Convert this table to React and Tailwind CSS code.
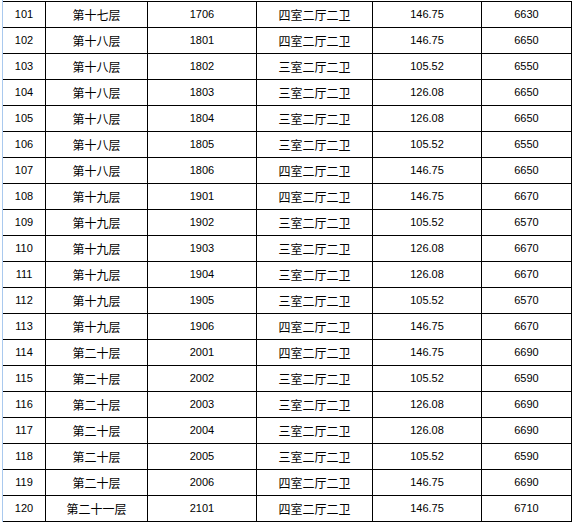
const rows = [
  ["101", "第十七层", "1706", "四室二厅二卫", "146.75", "6630"],
  ["102", "第十八层", "1801", "四室二厅二卫", "146.75", "6650"],
  ["103", "第十八层", "1802", "三室二厅二卫", "105.52", "6550"],
  ["104", "第十八层", "1803", "三室二厅二卫", "126.08", "6650"],
  ["105", "第十八层", "1804", "三室二厅二卫", "126.08", "6650"],
  ["106", "第十八层", "1805", "三室二厅二卫", "105.52", "6550"],
  ["107", "第十八层", "1806", "四室二厅二卫", "146.75", "6650"],
  ["108", "第十九层", "1901", "四室二厅二卫", "146.75", "6670"],
  ["109", "第十九层", "1902", "三室二厅二卫", "105.52", "6570"],
  ["110", "第十九层", "1903", "三室二厅二卫", "126.08", "6670"],
  ["111", "第十九层", "1904", "三室二厅二卫", "126.08", "6670"],
  ["112", "第十九层", "1905", "三室二厅二卫", "105.52", "6570"],
  ["113", "第十九层", "1906", "四室二厅二卫", "146.75", "6670"],
  ["114", "第二十层", "2001", "四室二厅二卫", "146.75", "6690"],
  ["115", "第二十层", "2002", "三室二厅二卫", "105.52", "6590"],
  ["116", "第二十层", "2003", "三室二厅二卫", "126.08", "6690"],
  ["117", "第二十层", "2004", "三室二厅二卫", "126.08", "6690"],
  ["118", "第二十层", "2005", "三室二厅二卫", "105.52", "6590"],
  ["119", "第二十层", "2006", "四室二厅二卫", "146.75", "6690"],
  ["120", "第二十一层", "2101", "四室二厅二卫", "146.75", "6710"],
];

const num = "font-['Liberation_Sans',Arial,sans-serif] text-[11px]";
const cjk = "font-['Noto_Sans_CJK_SC',sans-serif] text-[12px]";

function Row({ r }) {
  return (
    <div className="flex h-[26px] border-b border-black">
      <div className={`flex w-[43px] items-center justify-center border-r border-black ${num}`}>{r[0]}</div>
      <div className={`flex w-[102px] items-center justify-center border-r border-black ${cjk}`}>{r[1]}</div>
      <div className={`flex w-[109px] items-center justify-center border-r border-black ${num}`}>{r[2]}</div>
      <div className={`flex w-[116px] items-center justify-center border-r border-black ${cjk}`}>{r[3]}</div>
      <div className={`flex w-[109px] items-center justify-center border-r border-black ${num}`}>{r[4]}</div>
      <div className={`flex w-[90px] items-center justify-center border-r border-black ${num}`}>{r[5]}</div>
    </div>
  );
}

export default function App() {
  return (
    <div className="flex h-[522px] w-[573px] bg-white text-black">
      <div className="ml-[2px] w-[1px] bg-[#a9c9ee]"></div>
      <div className="mt-[1px] w-[569px]">
        <div className="border-t border-black">
          {rows.map((r) => (
            <Row key={r[0]} r={r} />
          ))}
        </div>
      </div>
    </div>
  );
}
